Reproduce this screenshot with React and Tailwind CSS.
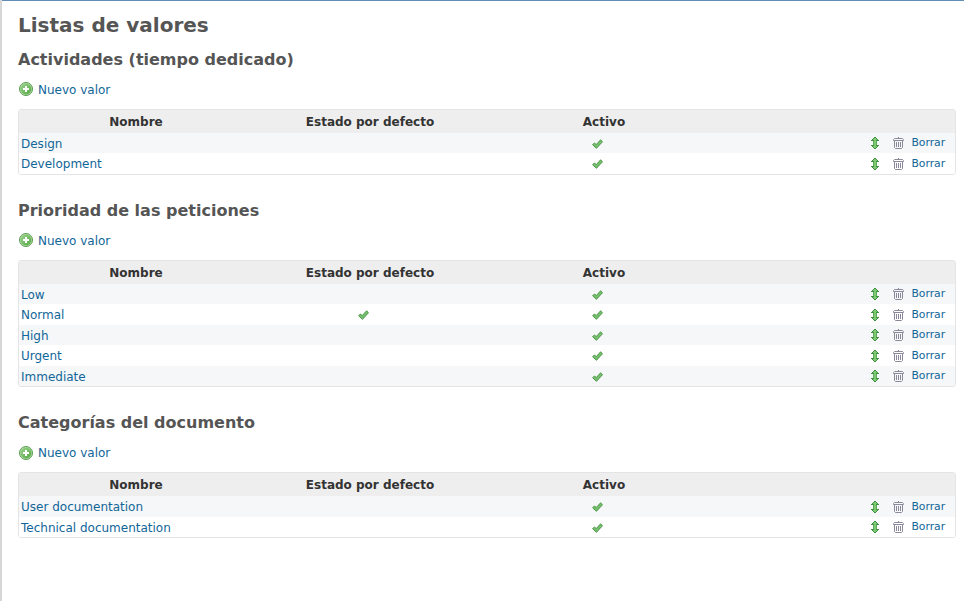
const sections = [
  { title: 'Actividades (tiempo dedicado)', rows: [['Design', 20], ['Development', 21]] },
  {
    title: 'Prioridad de las peticiones',
    rows: [['Low', 20], ['Normal', 21, true], ['High', 20], ['Urgent', 21], ['Immediate', 20]],
  },
  { title: 'Categorías del documento', low: true, rows: [['User documentation', 21], ['Technical documentation', 20]] },
];

function AddIcon() {
  return (
    <svg className="block h-[14px] w-[14px]" viewBox="0 0 14 14">
      <defs>
        <linearGradient id="add" x1="0" y1="0" x2="1" y2="1">
          <stop offset="0" stopColor="#9ad28c" />
          <stop offset="1" stopColor="#55a844" />
        </linearGradient>
      </defs>
      <circle cx="7" cy="7" r="6.5" fill="#b5dcaa" stroke="#579c50" />
      <circle cx="7" cy="7" r="5.4" fill="url(#add)" />
      <path d="M6 4h2v2h2v2H8v2H6V8H4V6h2z" fill="#fff" />
    </svg>
  );
}

function Check() {
  return (
    <svg className="block h-[10px] w-[11px]" viewBox="0 0 11 10">
      <path d="M.6 5.8 2.4 4 4.3 5.5 8.6.8 10.5 2.7 4.5 9.3z" fill="#74c06c" stroke="#459040" strokeWidth=".9" strokeLinejoin="round" />
    </svg>
  );
}

function SortArrow() {
  return (
    <svg className="block h-3 w-2" viewBox="0 0 8 12">
      <path d="M3 0h2v1h1v1h1v1h1v1H6v4h2v1H7v1H6v1H5v1H3v-1H2v-1H1V9H0V8h2V4H0V3h1V2h1V1h1z" fill="#3f9040" />
      <path d="M3 1h2v1h1v1H5v6h1v1H5v1H3v-1H2V9h1V3H2V2h1z" fill="#7cc873" />
      <path d="M2 4h1v4H2zM5 4h1v4H5z" fill="#5cab57" />
    </svg>
  );
}

function Trash() {
  return (
    <svg className="block h-3 w-[11px]" viewBox="0 0 11 12" fill="none" stroke="#8b8999">
      <path d="M5.5 0v1M.5 3.5v-1L1.5 1.5h8l1 1v1zM1.5 4v6.5l1 1h6l1-1V4M3.5 5v5M5.5 5v5M7.5 5v5" />
    </svg>
  );
}

function Row({ name, height, isDefault, striped }) {
  return (
    <div className={`flex ${height === 21 ? 'h-[21px]' : 'h-5'} ${striped ? 'bg-[#f6f7f8]' : 'bg-white'}`}>
      <a className="w-[234px] pl-[2px] leading-[22px] text-[#169]">{name}</a>
      <div className="w-[234px] pt-[6px] pl-[105px]">{isDefault && <Check />}</div>
      <div className="w-[234px] pt-[6px] pl-[105px]"><Check /></div>
      <div className="flex flex-1 items-end pb-1 pl-[150px]">
        <SortArrow />
        <div className="ml-[14px]"><Trash /></div>
        <a className="ml-[7.4px] text-[10.8px] leading-3 text-[#169]">Borrar</a>
      </div>
    </div>
  );
}

function Section({ title, rows, low }) {
  return (
    <section className="mb-[26px]">
      <h3 className="h-5 text-base leading-5 font-bold text-[#555]">{title}</h3>
      <div className="mt-3 flex h-[14px] pl-px">
        <div className={low ? 'pt-px' : ''}><AddIcon /></div>
        <a className="ml-[5px] leading-4 text-[#169]">Nuevo valor</a>
      </div>
      <div className="mt-[13px] overflow-hidden rounded-[3px] border border-[#e4e4e4]">
        <div className="flex h-[23px] bg-[#eee] text-center leading-[25px] font-bold text-[#333]">
          <div className="w-[234px]">Nombre</div>
          <div className="w-[234px]">Estado por defecto</div>
          <div className="w-[234px]">Activo</div>
        </div>
        {rows.map(([name, height, isDefault], i) => (
          <Row key={name} name={name} height={height} isDefault={isDefault} striped={i % 2 === 0} />
        ))}
      </div>
    </section>
  );
}

export default function App() {
  return (
    <div className="flex h-[601px] w-[964px] overflow-hidden bg-white font-['DejaVu_Sans',sans-serif] text-[12px]">
      <div className="w-[2px] bg-[#d7d7d7]" />
      <main className="flex-1 border-t border-[#628db6] pt-3 pr-2 pl-4">
        <h2 className="mb-[13px] h-6 text-[20px] leading-6 font-bold text-[#555]">Listas de valores</h2>
        {sections.map((s) => (
          <Section key={s.title} {...s} />
        ))}
      </main>
    </div>
  );
}
